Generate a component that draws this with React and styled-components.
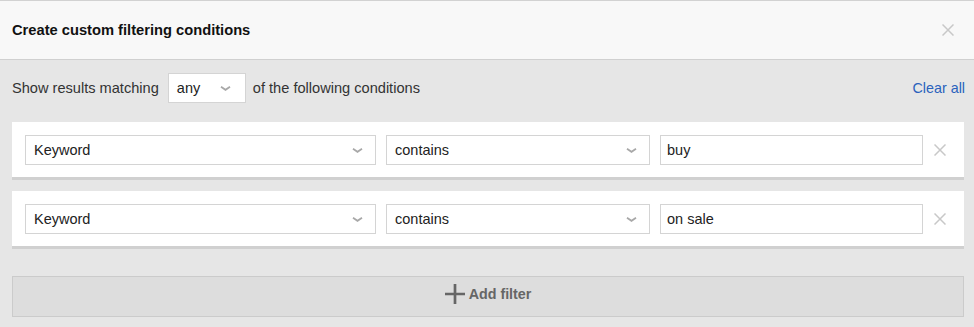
import React from "react";
import styled, { createGlobalStyle } from "styled-components";

const Global = createGlobalStyle`
  html, body { margin: 0; padding: 0; background: #e6e6e6; }
  body { font-family: "Liberation Sans", Arial, sans-serif; color: #222; }
  * { box-sizing: border-box; }
`;

const Dialog = styled.div`
  width: 974px;
  height: 327px;
  background: #e6e6e6;
  display: flex;
  flex-direction: column;
  overflow: hidden;
`;

const Header = styled.div`
  height: 60px;
  background: #f8f8f8;
  border-top: 1px solid #d2d2d2;
  border-bottom: 1px solid #d0d0d0;
  display: flex;
  align-items: center;
  justify-content: space-between;
  padding: 0 20px 0 12px;
`;

const Title = styled.h1`
  margin: 0;
  font-size: 14.7px;
  font-weight: bold;
  color: #111;
  padding-bottom: 1px;
`;

const IconButton = styled.button`
  border: 0;
  background: none;
  padding: 0;
  width: ${(p) => p.$w || 12}px;
  height: 12px;
  display: flex;
  align-items: center;
  justify-content: center;
  cursor: pointer;
  flex: 0 0 auto;
`;

const Body = styled.div`
  flex: 1;
  display: flex;
  flex-direction: column;
  padding: 13px 10px 0 12px;
`;

const MatchRow = styled.div`
  display: flex;
  align-items: center;
  font-size: 14.6px;
  color: #333;
  height: 30px;
  margin-bottom: 19px;
`;

const MatchText = styled.span`
  margin-right: ${(p) => p.$mr || 0}px;
  margin-left: ${(p) => p.$ml || 0}px;
`;

const ClearLink = styled.a`
  margin-left: auto;
  color: #2a62bd;
  text-decoration: none;
  font-size: 14.3px;
  margin-right: -1px;
  cursor: pointer;
`;

const SelectBox = styled.div`
  width: ${(p) => p.$w}px;
  height: 30px;
  flex: 0 0 ${(p) => p.$w}px;
  background: #fff;
  border: 1px solid #d4d4d4;
  display: flex;
  align-items: center;
  justify-content: space-between;
  padding: 0 ${(p) => p.$pr || 12}px 0 8px;
  font-size: 14.5px;
  color: #222;
`;

const TextInput = styled.div`
  width: ${(p) => p.$w}px;
  height: 30px;
  flex: 0 0 ${(p) => p.$w}px;
  background: #fff;
  border: 1px solid #d4d4d4;
  display: flex;
  align-items: center;
  padding: 0 6px;
  font-size: 14.5px;
  color: #222;
`;

const Cards = styled.div`
  display: flex;
  flex-direction: column;
  gap: 11px;
`;

const Card = styled.div`
  background: #fff;
  border-bottom: 3px solid #d0d0d0;
  padding: 13px 0 12px 13px;
  display: flex;
  align-items: center;
  gap: 10px;
`;

const AddButton = styled.button`
  margin-top: 27px;
  height: 41px;
  width: 100%;
  background: #dddddd;
  border: 1px solid #cbcbcb;
  display: flex;
  align-items: center;
  justify-content: center;
  gap: 4px;
  padding: 0 0 6px;
  font-family: "Liberation Sans", Arial, sans-serif;
  font-size: 14.3px;
  font-weight: bold;
  color: #666;
  cursor: pointer;
`;

const Chevron = () => (
  <svg width="11" height="5" viewBox="0 0 11 5">
    <path d="M1 0.8 L5.5 3.8 L10 0.8" fill="none" stroke="#a8a8a8" strokeWidth="1.8" />
  </svg>
);

const Cross = ({ color = "#c8c8c8" }) => (
  <svg width="12" height="12" viewBox="0 0 12 12">
    <path d="M0.5 0.5 L11.5 11.5 M11.5 0.5 L0.5 11.5" stroke={color} strokeWidth="1.5" />
  </svg>
);

const Plus = () => (
  <svg width="20" height="20" viewBox="0 0 20 20">
    <path d="M0 10 H20 M10 0 V20" stroke="#666" strokeWidth="2.7" />
  </svg>
);

const filters = [
  { field: "Keyword", op: "contains", value: "buy" },
  { field: "Keyword", op: "contains", value: "on sale" },
];

export default function App() {
  return (
    <>
      <Global />
      <Dialog>
        <Header>
          <Title>Create custom filtering conditions</Title>
          <IconButton aria-label="Close">
            <Cross />
          </IconButton>
        </Header>
        <Body>
          <MatchRow>
            <MatchText $mr={9}>Show results matching</MatchText>
            <SelectBox $w={78} $pr={14}>
              any
              <Chevron />
            </SelectBox>
            <MatchText $ml={7}>of the following conditions</MatchText>
            <ClearLink>Clear all</ClearLink>
          </MatchRow>
          <Cards>
            {filters.map((f, i) => (
              <Card key={i}>
                <SelectBox $w={351}>
                  {f.field}
                  <Chevron />
                </SelectBox>
                <SelectBox $w={264}>
                  {f.op}
                  <Chevron />
                </SelectBox>
                <TextInput $w={263}>{f.value}</TextInput>
                <IconButton $w={14} aria-label="Remove">
                  <Cross />
                </IconButton>
              </Card>
            ))}
          </Cards>
          <AddButton>
            <Plus />
            Add filter
          </AddButton>
        </Body>
      </Dialog>
    </>
  );
}
